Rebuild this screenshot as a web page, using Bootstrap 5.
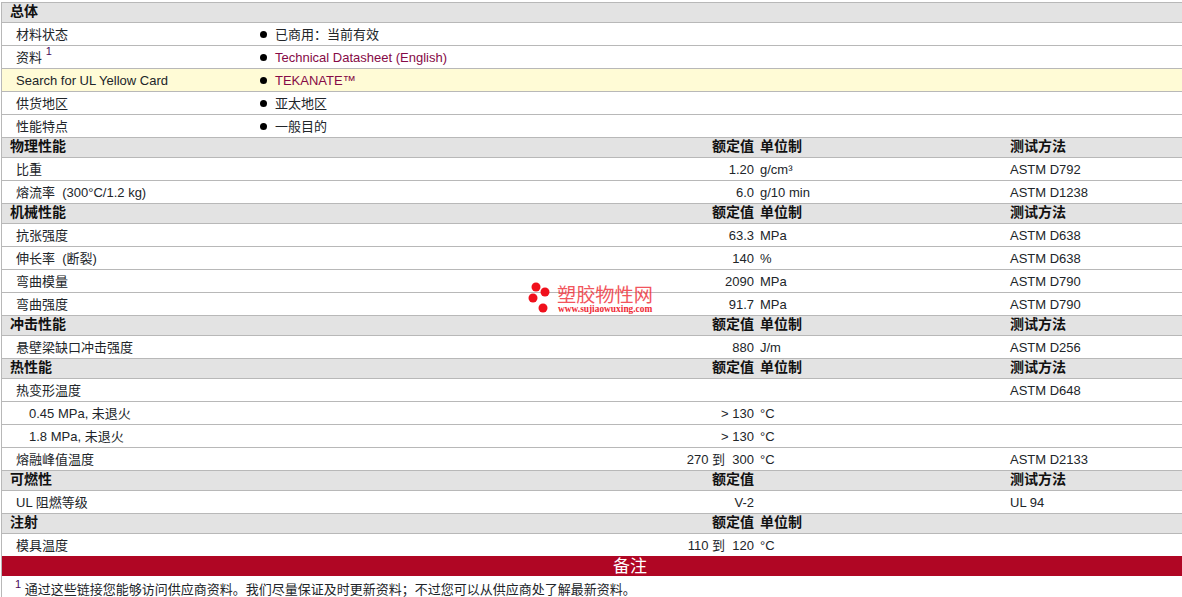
<!DOCTYPE html>
<html lang="zh">
<head>
<meta charset="utf-8">
<title>物性表</title>
<link rel="stylesheet" href="https://cdn.jsdelivr.net/npm/bootstrap@5.3.0/dist/css/bootstrap.min.css">
<style>
html,body{background:#fff;}
body{font-family:"Liberation Sans","Noto Sans CJK SC",sans-serif;font-size:13px;line-height:15px;color:#1a1a2a;height:597px;overflow:hidden;}
.sheet-wrap{padding-top:2px;padding-left:1px;}
.sheet{table-layout:fixed;width:1181px;border-collapse:separate;border-spacing:0;margin:0;border-left:1px solid #b8b8b8;border-top:1px solid #b8b8b8;}
.sheet td,.sheet th{padding:0 3px;height:23px;border-bottom:1px solid #b8b8b8;vertical-align:middle;font-size:13px;line-height:15px;background:#fff;white-space:nowrap;}
.sheet tr.sec th{height:20px;background:#e3e3e3;font-weight:700;font-size:14px;color:#111;padding-bottom:2px;}
.sheet tr.gold td{background:#fffbd6;}
.sheet tr.last-row td{height:22px;border-bottom:0;}
.sheet tr.note-head th{height:20px;background:#b00624;color:#fff;text-align:center;font-family:"Liberation Serif","Noto Sans CJK SC",serif;font-size:17px;font-weight:400;border-bottom:0;padding:0 0 0 76px;}
.sheet tr.note-row td{border-bottom:0;padding:6px 0 0 13px;font-size:13px;vertical-align:top;}
.lab{padding-left:14px !important;}
.sub{padding-left:27px !important;}
.ttl{padding-left:8px !important;}
.num{text-align:right;}
.dot-list{list-style:none;margin:0;padding:0 0 0 1px;}
.dot-list li::before{content:"";display:inline-block;width:7px;height:7px;border-radius:50%;background:#000;margin-right:8px;vertical-align:1px;}
.vlink{color:#860a46;text-decoration:none;}
sup.fn{font-size:11px;color:#4a0a5a;top:-.55em;}
.wm{position:absolute;left:527px;top:280px;width:130px;height:36px;color:#ef2b35;pointer-events:none;}
.wm svg{position:absolute;left:0;top:0;}
.wm-cn{position:absolute;left:30px;top:6px;font-size:19.2px;line-height:20px;opacity:.8;}
.wm-en{position:absolute;left:31px;top:24px;font-family:"Liberation Serif",serif;font-weight:700;font-size:9.4px;line-height:10px;}
</style>
</head>
<body>
<div class="sheet-wrap">
<table class="table sheet">
<colgroup><col style="width:254px"><col style="width:501px"><col style="width:250px"><col></colgroup>
<tbody>
<tr class="sec"><th class="ttl" colspan="4">总体</th></tr>
<tr><td class="lab">材料状态</td><td colspan="3"><ul class="dot-list"><li>已商用：当前有效</li></ul></td></tr>
<tr><td class="lab">资料 <sup class="fn">1</sup></td><td colspan="3"><ul class="dot-list"><li><a class="vlink" href="#">Technical Datasheet (English)</a></li></ul></td></tr>
<tr class="gold"><td class="lab">Search for UL Yellow Card</td><td colspan="3"><ul class="dot-list"><li><a class="vlink" href="#">TEKANATE™</a></li></ul></td></tr>
<tr><td class="lab">供货地区</td><td colspan="3"><ul class="dot-list"><li>亚太地区</li></ul></td></tr>
<tr><td class="lab">性能特点</td><td colspan="3"><ul class="dot-list"><li>一般目的</li></ul></td></tr>

<tr class="sec"><th class="ttl">物理性能</th><th class="num">额定值</th><th>单位制</th><th>测试方法</th></tr>
<tr><td class="lab">比重</td><td class="num">1.20</td><td>g/cm³</td><td>ASTM D792</td></tr>
<tr><td class="lab">熔流率&nbsp; (300°C/1.2 kg)</td><td class="num">6.0</td><td>g/10 min</td><td>ASTM D1238</td></tr>

<tr class="sec"><th class="ttl">机械性能</th><th class="num">额定值</th><th>单位制</th><th>测试方法</th></tr>
<tr><td class="lab">抗张强度</td><td class="num">63.3</td><td>MPa</td><td>ASTM D638</td></tr>
<tr><td class="lab">伸长率&nbsp; (断裂)</td><td class="num">140</td><td>%</td><td>ASTM D638</td></tr>
<tr><td class="lab">弯曲模量</td><td class="num">2090</td><td>MPa</td><td>ASTM D790</td></tr>
<tr><td class="lab">弯曲强度</td><td class="num">91.7</td><td>MPa</td><td>ASTM D790</td></tr>

<tr class="sec"><th class="ttl">冲击性能</th><th class="num">额定值</th><th>单位制</th><th>测试方法</th></tr>
<tr><td class="lab">悬壁梁缺口冲击强度</td><td class="num">880</td><td>J/m</td><td>ASTM D256</td></tr>

<tr class="sec"><th class="ttl">热性能</th><th class="num">额定值</th><th>单位制</th><th>测试方法</th></tr>
<tr><td class="lab">热变形温度</td><td></td><td></td><td>ASTM D648</td></tr>
<tr><td class="sub">0.45 MPa, 未退火</td><td class="num">&gt; 130</td><td>°C</td><td></td></tr>
<tr><td class="sub">1.8 MPa, 未退火</td><td class="num">&gt; 130</td><td>°C</td><td></td></tr>
<tr><td class="lab">熔融峰值温度</td><td class="num">270 到&nbsp; 300</td><td>°C</td><td>ASTM D2133</td></tr>

<tr class="sec"><th class="ttl">可燃性</th><th class="num">额定值</th><th></th><th>测试方法</th></tr>
<tr><td class="lab">UL 阻燃等级</td><td class="num">V-2</td><td></td><td>UL 94</td></tr>

<tr class="sec"><th class="ttl">注射</th><th class="num">额定值</th><th>单位制</th><th></th></tr>
<tr class="last-row"><td class="lab">模具温度</td><td class="num">110 到&nbsp; 120</td><td>°C</td><td></td></tr>

<tr class="note-head"><th colspan="4">备注</th></tr>
<tr class="note-row"><td colspan="4"><sup class="fn">1</sup> 通过这些链接您能够访问供应商资料。我们尽量保证及时更新资料；不过您可以从供应商处了解最新资料。</td></tr>
</tbody>
</table>
</div>
<div class="wm">
<svg width="28" height="36" viewBox="0 0 28 36" aria-hidden="true"><g fill="#f0101c"><circle cx="9" cy="7" r="4.5"/><circle cx="18" cy="12" r="4.5"/><circle cx="6" cy="18" r="4.5"/><circle cx="16" cy="28" r="4.5"/></g></svg>
<span class="wm-cn">塑胶物性网</span>
<span class="wm-en">www.sujiaowuxing.com</span>
</div>
</body>
</html>
